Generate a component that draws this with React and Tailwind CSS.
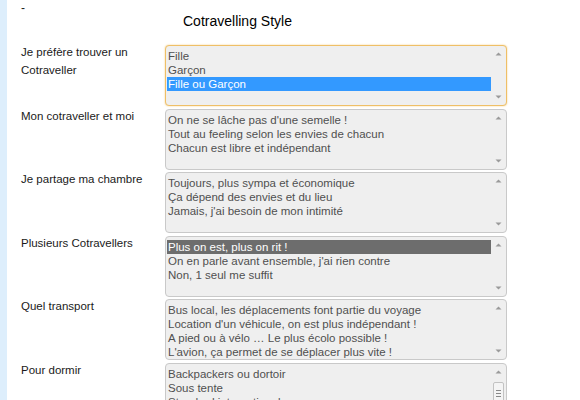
const rows = [
  {
    label: ['Je préfère trouver un', 'Cotraveller'],
    options: ['Fille', 'Garçon', 'Fille ou Garçon'],
    selected: 2,
    focus: true,
  },
  {
    label: ['Mon cotraveller et moi'],
    options: [
      "On ne se lâche pas d'une semelle !",
      'Tout au feeling selon les envies de chacun',
      'Chacun est libre et indépendant',
    ],
  },
  {
    label: ['Je partage ma chambre'],
    options: [
      'Toujours, plus sympa et économique',
      'Ça dépend des envies et du lieu',
      "Jamais, j'ai besoin de mon intimité",
    ],
  },
  {
    label: ['Plusieurs Cotravellers'],
    options: [
      'Plus on est, plus on rit !',
      "On en parle avant ensemble, j'ai rien contre",
      'Non, 1 seul me suffit',
    ],
    selected: 0,
  },
  {
    label: ['Quel transport'],
    options: [
      'Bus local, les déplacements font partie du voyage',
      "Location d'un véhicule, on est plus indépendant !",
      'A pied ou à vélo … Le plus écolo possible !',
      "L'avion, ça permet de se déplacer plus vite !",
    ],
  },
  {
    label: ['Pour dormir'],
    options: ['Backpackers ou dortoir', 'Sous tente', 'Standard international', 'Chez l’habitant'],
    thumb: true,
  },
];

const Arrow = ({ down }) => (
  <svg width="7" height="4" viewBox="0 0 7 4" className="block">
    <path d={down ? 'M0.5 0.5h6L3.5 3.5z' : 'M3.5 0.5l3 3h-6z'} fill="#9a9a9a" />
  </svg>
);

const ListBox = ({ options, selected, focus, thumb }) => (
  <div
    className={
      'relative flex h-[61px] w-[342px] overflow-hidden rounded-[4px] border bg-[#efefef] ' +
      (focus ? 'border-[#efbf66] shadow-[0_0_2px_#f3cd85]' : 'border-[#c9c9c9]')
    }
  >
    <div className="flex-1 overflow-hidden pl-[1px] pt-[3px]">
      {options.map((o, i) => {
        const isSel = i === selected;
        return (
          <div
            key={i}
            className={
              'h-[14px] whitespace-nowrap pl-[1px] text-[11.5px] leading-[14px] ' +
              (isSel
                ? focus
                  ? 'bg-[#3399ff] text-white'
                  : 'bg-[#6d6d6d] text-white'
                : 'text-[#505050]')
            }
          >
            {o}
          </div>
        );
      })}
    </div>
    <div className="flex w-[15px] flex-col items-center justify-between pb-[6px] pt-[6px]">
      <Arrow />
      {thumb && (
        <div className="flex h-[22px] w-[11px] flex-col items-center justify-center gap-[2px] rounded-[2px] border border-[#c2c2c2] bg-[#f4f4f4]">
          <div className="h-[1px] w-[5px] bg-[#888]" />
          <div className="h-[1px] w-[5px] bg-[#888]" />
          <div className="h-[1px] w-[5px] bg-[#888]" />
        </div>
      )}
      <Arrow down />
    </div>
  </div>
);

export default function App() {
  return (
    <div className="flex h-[400px] w-[580px] overflow-hidden bg-white font-['Liberation_Sans',Arial,sans-serif]">
      <div className="w-[7px] shrink-0 bg-[#ddeefc]" />
      <div className="flex-1 pl-[14px]">
        <div className="h-[14px] pt-[2px] text-[12px] leading-[12px] text-[#222]">-</div>
        <div className="ml-[162px] h-[31px] text-[14px] leading-[14px] text-black">Cotravelling Style</div>
        <div className="flex flex-col gap-[2.6px]">
          {rows.map((r, i) => (
            <div key={i} className="flex">
              <div className="-mt-[2px] w-[144px] text-[11.5px] leading-[18px] text-[#1a1a1a]">
                {r.label.map((l, j) => (
                  <div key={j}>{l}</div>
                ))}
              </div>
              <ListBox {...r} />
            </div>
          ))}
        </div>
      </div>
    </div>
  );
}
